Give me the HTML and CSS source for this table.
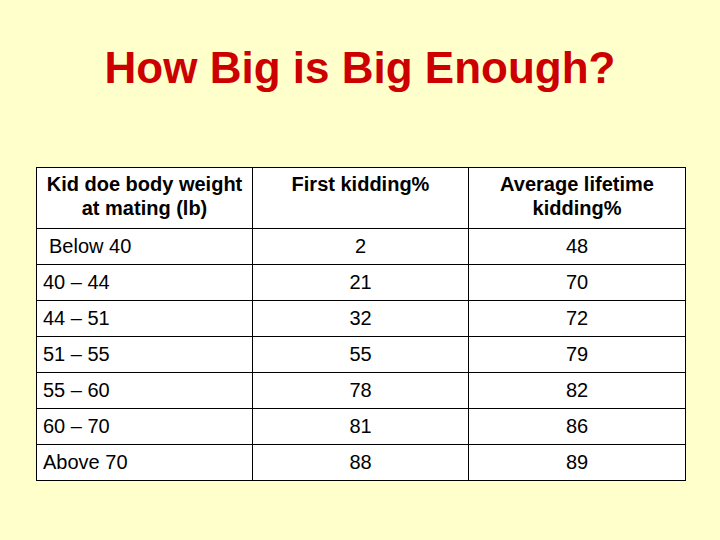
FILE: index.html
```html
<!DOCTYPE html>
<html>
<head>
<meta charset="utf-8">
<link rel="stylesheet" href="styles.css">
</head>
<body>
<div class="slide">
  <h1 class="title">How Big is Big Enough?</h1>
  <table class="data">
    <colgroup><col class="c1"><col class="c2"><col class="c3"></colgroup>
    <thead>
      <tr class="head">
        <th>Kid doe body weight<br>at mating (lb)</th>
        <th>First kidding%</th>
        <th>Average lifetime kidding%</th>
      </tr>
    </thead>
    <tbody>
      <tr><td class="lbl indent">Below 40</td><td>2</td><td>48</td></tr>
      <tr><td class="lbl">40 – 44</td><td>21</td><td>70</td></tr>
      <tr><td class="lbl">44 – 51</td><td>32</td><td>72</td></tr>
      <tr><td class="lbl">51 – 55</td><td>55</td><td>79</td></tr>
      <tr><td class="lbl">55 – 60</td><td>78</td><td>82</td></tr>
      <tr><td class="lbl">60 – 70</td><td>81</td><td>86</td></tr>
      <tr><td class="lbl">Above 70</td><td>88</td><td>89</td></tr>
    </tbody>
  </table>
</div>
</body>
</html>
```
FILE: styles.css
```css
html, body {
  margin: 0;
  padding: 0;
  background: #ffffcc;
}
.slide {
  width: 720px;
  height: 540px;
  font-family: "Liberation Sans", Arial, sans-serif;
  color: #000;
  padding-top: 44px;
  box-sizing: border-box;
}
.title {
  margin: 0;
  text-align: center;
  color: #cc0000;
  font-size: 44px;
  font-weight: bold;
  line-height: 48px;
}
.data {
  margin: 75px 0 0 36px;
  border-collapse: collapse;
  background: #fff;
  width: 649px;
  table-layout: fixed;
}
.c1 { width: 216px; }
.c2 { width: 216px; }
.c3 { width: 217px; }
.data th, .data td {
  border: 1px solid #000;
  font-size: 20px;
  padding: 0 6px;
}
.data th {
  font-weight: bold;
  line-height: 24px;
  height: 61px;
  vertical-align: top;
  padding-top: 4px;
  box-sizing: border-box;
}
.data td {
  height: 33px;
  line-height: 20px;
  text-align: center;
  padding-top: 0;
  padding-bottom: 2px;
}
.data td.lbl {
  text-align: left;
}
.data td.indent {
  padding-left: 12px;
}
```
